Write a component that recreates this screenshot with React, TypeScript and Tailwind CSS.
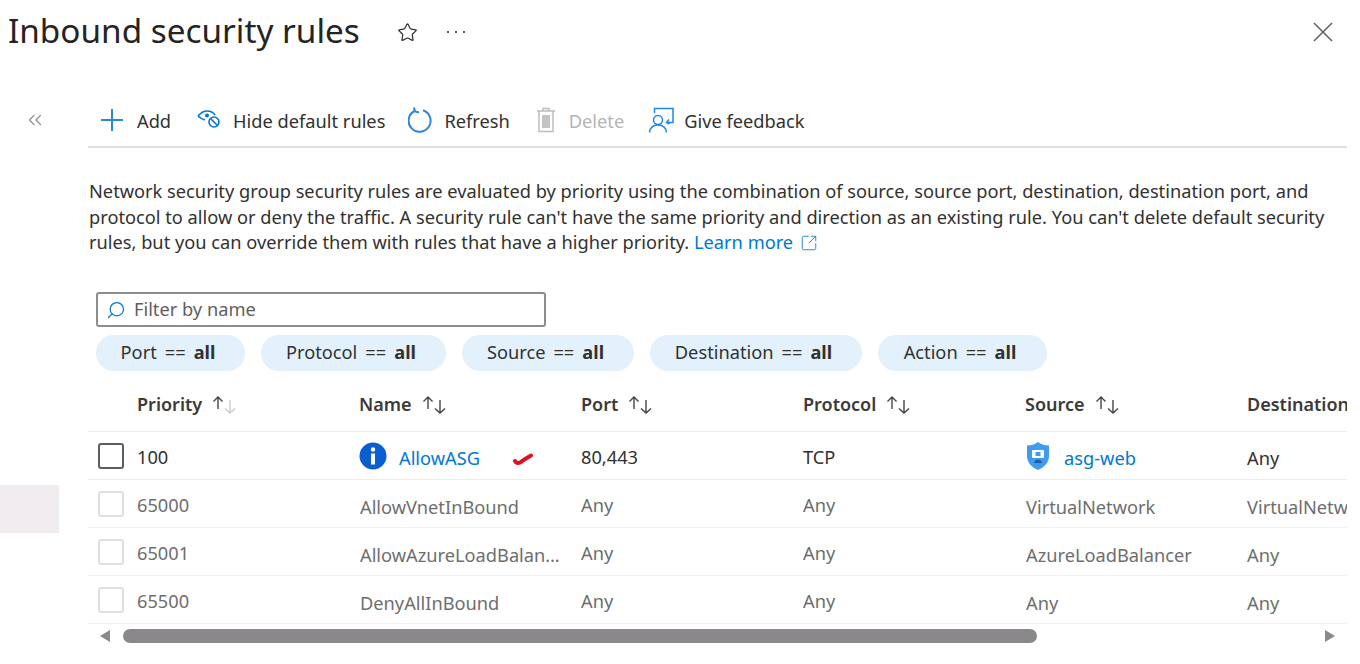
import { Star, ChevronsLeft, Search, SquareArrowOutUpRight } from 'lucide-react';

function SortIcon({ dim = false }: { dim?: boolean }) {
  return (
    <svg width="26" height="20" viewBox="0 0 26 20" fill="none" className="shrink-0">
      <path d="M7 14V2M2.500 6.500 7 2l4.500 4.500" stroke="#444" strokeWidth="1.400" />
      <path d="M19 5v13M14 13.500l5 4.500 5-4.500" stroke={dim ? '#ccc' : '#444'} strokeWidth="1.400" />
    </svg>
  );
}

function PlusIcon() {
  return (
    <svg width="24" height="24" viewBox="0 0 24 24" fill="none" stroke="#2b88d8" strokeWidth="2">
      <path d="M12 1v22M1 12h22" />
    </svg>
  );
}

function CloseIcon() {
  return (
    <svg width="20" height="20" viewBox="0 0 20 20" fill="none" stroke="#605e5c" strokeWidth="1.500">
      <path d="m1 1 18 18M19 1 1 19" />
    </svg>
  );
}

function HideIcon() {
  return (
    <svg width="24" height="20" viewBox="0 0 24 20" fill="none" stroke="#0078d4" strokeWidth="1.600">
      <path d="M1 6c3-3.500 6-5 9-5 3 0 6 1 8 4" />
      <path d="M1 6c2 2 4 3 7 4" />
      <circle cx="10" cy="5.500" r="2" fill="#0078d4" stroke="none" />
      <circle cx="17" cy="12" r="5" />
      <path d="m13.500 8.500 7 7" />
    </svg>
  );
}

function RefreshIcon() {
  return (
    <svg width="24" height="26" viewBox="0 0 24 26" fill="none" stroke="#2b88d8" strokeWidth="2">
      <path d="M15 3.300A11 11 0 1 1 6.500 4" />
      <path d="M6 0.500 7 4.500l4 1" />
    </svg>
  );
}

function TrashIcon() {
  return (
    <svg width="24" height="26" viewBox="0 0 24 26" fill="none" stroke="#bdbdbd" strokeWidth="1.500">
      <path d="M3 4h18M9 4V1.500h6V4M5 4v20.500h14V4" />
      <rect x="8" y="8" width="8" height="13" fill="#c4c4c4" stroke="none" />
    </svg>
  );
}

function FeedbackIcon() {
  return (
    <svg width="26" height="26" viewBox="0 0 26 26" fill="none" stroke="#1e88e5" strokeWidth="1.500">
      <path d="M6.500 6V1.500h18.500v14h-6" />
      <path d="m21 12.500-2.500 3 3 1.500" />
      <circle cx="10" cy="13" r="4.500" />
      <path d="M1.500 25.500c0-4.500 3.500-7.500 8.500-7.500s8.500 3 8.500 7.500" />
    </svg>
  );
}

function InfoIcon() {
  return (
    <svg width="28" height="28" viewBox="0 0 28 28">
      <circle cx="14" cy="14" r="13.500" fill="#0a5fd0" />
      <circle cx="14" cy="7.500" r="2.200" fill="#fff" />
      <rect x="12" y="11.500" width="4" height="11" fill="#fff" />
    </svg>
  );
}

function ShieldIcon() {
  return (
    <svg width="24" height="28" viewBox="0 0 24 28">
      <path d="M12 0c3 2.500 7 3.500 11 3.500V14c0 6-4 11-11 14C5 25 1 20 1 14V3.500C5 3.500 9 2.500 12 0Z" fill="#3f9bf0" />
      <rect x="6" y="8" width="12" height="8" rx="1" fill="#fff" />
      <rect x="9.500" y="10" width="5" height="4" fill="#3f9bf0" />
      <path d="M8 21c.5-2.500 2-3.500 4-3.500s3.500 1 4 3.500Z" fill="#1d5fa8" />
    </svg>
  );
}

const filters = [
  { label: 'Port', w: 'w-[149px]' },
  { label: 'Protocol', w: 'w-[185px]' },
  { label: 'Source', w: 'w-[172px]' },
  { label: 'Destination', w: 'w-[212px]' },
  { label: 'Action', w: 'w-[169px]' },
];

const columns = ['Name', 'Port', 'Protocol', 'Source', 'Destination'];

const rows = [
  { priority: '65000', name: 'AllowVnetInBound', port: 'Any', protocol: 'Any', source: 'VirtualNetwork', dest: 'VirtualNetwork' },
  { priority: '65001', name: 'AllowAzureLoadBalancerInBound', port: 'Any', protocol: 'Any', source: 'AzureLoadBalancer', dest: 'Any' },
  { priority: '65500', name: 'DenyAllInBound', port: 'Any', protocol: 'Any', source: 'Any', dest: 'Any' },
];

export default function App() {
  return (
    <div className="h-[664px] w-[1360px] overflow-hidden bg-white font-['Noto_Sans',sans-serif] text-[18.240px] text-[#323130]">
      {/* title bar */}
      <div className="flex h-[64px] items-center pl-[8px] pr-[27px]">
        <h1 className="-mt-[3px] text-[33.300px] leading-none text-[#252423]">Inbound security rules</h1>
        <Star className="ml-[37px] h-[21px] w-[21px] text-[#323130]" strokeWidth={1.400} />
        <div className="ml-[29px] flex gap-[6px]">
          <div className="h-[2px] w-[2px] bg-[#605e5c]" />
          <div className="h-[2px] w-[2px] bg-[#605e5c]" />
          <div className="h-[2px] w-[2px] bg-[#605e5c]" />
        </div>
        <div className="ml-auto"><CloseIcon /></div>
      </div>

      <div className="flex">
        {/* collapsed side menu */}
        <div className="w-[88px] shrink-0">
          <div className="flex h-[112px] items-center pl-[24px]">
            <ChevronsLeft className="h-[22px] w-[22px] text-[#8a8886]" strokeWidth={1.300} />
          </div>
          <div className="mt-[309px] h-[48px] w-[59px] bg-[#f0ecf0]" />
        </div>

        <div className="w-[1259px] shrink-0">
          {/* toolbar */}
          <div className="flex h-[84px] items-center border-b-2 border-[#e1dfdd] pl-[12px] pt-[30px]">
            <PlusIcon />
            <span className="ml-[13px] pt-[3px]">Add</span>
            <div className="ml-[26px]"><HideIcon /></div>
            <span className="ml-[12px] pt-[3px]">Hide default rules</span>
            <div className="ml-[23px]"><RefreshIcon /></div>
            <span className="ml-[12px] pt-[3px]">Refresh</span>
            <div className="ml-[24px]"><TrashIcon /></div>
            <span className="ml-[11px] pt-[3px] text-[#b5b5b5]">Delete</span>
            <div className="ml-[24px]"><FeedbackIcon /></div>
            <span className="ml-[10px] pt-[3px]">Give feedback</span>
          </div>

          {/* description */}
          <p className="mt-[31px] w-[1250px] pl-[1px] leading-[25.700px] text-[#323130]">
            Network security group security rules are evaluated by priority using the combination of source, source port, destination, destination port, and protocol to allow or deny the traffic. A security rule can't have the same priority and direction as an existing rule. You can't delete default security rules, but you can override them with rules that have a higher priority.{' '}
            <span className="text-[#0078d4]">Learn more</span>{' '}
            <SquareArrowOutUpRight className="-mt-[3px] ml-[2px] inline h-[18px] w-[18px] text-[#2b88d8]" strokeWidth={1.300} />
          </p>

          {/* filter */}
          <div className="ml-[8px] mt-[36px] flex h-[35px] w-[450px] items-center gap-[8px] rounded-[3px] border-2 border-[#8f8d8b] pl-[8px] text-[#605e5c]">
            <Search className="h-[20px] w-[20px] -scale-x-100 text-[#0078d4]" strokeWidth={1.500} />
            <span>Filter by name</span>
          </div>

          {/* filter pills */}
          <div className="ml-[8px] mt-[8px] flex gap-[16px]">
            {filters.map((f) => (
              <div key={f.label} className={`flex h-[36px] ${f.w} items-center justify-center gap-[8px] rounded-full bg-[#e3f1fd] pr-[5px] text-[#323130]`}>
                <span>{f.label}</span>
                <span>==</span>
                <b className="font-bold">all</b>
              </div>
            ))}
          </div>

          {/* table */}
          <div className="mt-[9px] overflow-hidden">
            <div className="grid h-[52px] grid-cols-[271px_222px_222px_222px_222px_222px] items-center border-b border-[#edebe9] pb-[2px] text-[18px] font-semibold text-[#3b3a39]">
              <div className="flex items-center gap-[9px] pl-[49px]">
                Priority <SortIcon dim />
              </div>
              {columns.map((c) => (
                <div key={c} className="flex items-center gap-[9px] whitespace-nowrap">
                  {c} {c !== 'Destination' && <SortIcon />}
                </div>
              ))}
            </div>

            <div className="grid h-[48px] grid-cols-[271px_222px_222px_222px_222px_222px] items-center border-b border-[#edebe9]">
              <div className="flex items-center gap-[13px] pl-[10px]">
                <div className="h-[26px] w-[26px] rounded-[3px] border-2 border-[#605e5c]" />
                <span className="pt-[4px]">100</span>
              </div>
              <div className="flex items-center">
                <InfoIcon />
                <span className="ml-[12px] pt-[6px] text-[#0078d4]">AllowASG</span>
                <svg width="22" height="14" viewBox="0 0 22 14" fill="none" className="ml-[32px] mt-[6px]">
                  <path d="M3 9c1 2 3 2.500 5 1.500S14 6 19 3.500" stroke="#e01020" strokeWidth="4" strokeLinecap="round" />
                </svg>
              </div>
              <span className="pt-[4px]">80,443</span>
              <span className="pt-[4px]">TCP</span>
              <div className="flex items-center gap-[14px] pl-[1px]">
                <ShieldIcon />
                <span className="pt-[6px] text-[#0078d4]">asg-web</span>
              </div>
              <span className="pt-[6px]">Any</span>
            </div>

            {rows.map((r) => (
              <div key={r.priority} className="grid h-[48px] grid-cols-[271px_222px_222px_222px_222px_222px] items-center whitespace-nowrap border-b border-[#f3f2f1] text-[#6e6e6e]">
                <div className="flex items-center gap-[13px] pl-[10px]">
                  <div className="h-[26px] w-[26px] rounded-[3px] border-2 border-[#e1dfdd]" />
                  <span className="pt-[4px]">{r.priority}</span>
                </div>
                <span className="w-[201px] truncate pl-[1px] pt-[8px]">{r.name}</span>
                <span className="pt-[4px]">{r.port}</span>
                <span className="pt-[4px]">{r.protocol}</span>
                <span className="pl-[1px] pt-[8px]">{r.source}</span>
                <span className="pt-[8px]">{r.dest}</span>
              </div>
            ))}
          </div>

          {/* horizontal scrollbar */}
          <div className="mt-[5px] flex h-[14px] items-center px-[12px]">
            <div className="h-0 w-0 border-y-[6px] border-r-[10px] border-y-transparent border-r-[#8a8a8a]" />
            <div className="ml-[13px] h-[14px] w-[914px] rounded-full bg-[#8a888a]" />
            <div className="ml-auto h-0 w-0 border-y-[6px] border-l-[10px] border-y-transparent border-l-[#8a8a8a]" />
          </div>
        </div>
      </div>
    </div>
  );
}
